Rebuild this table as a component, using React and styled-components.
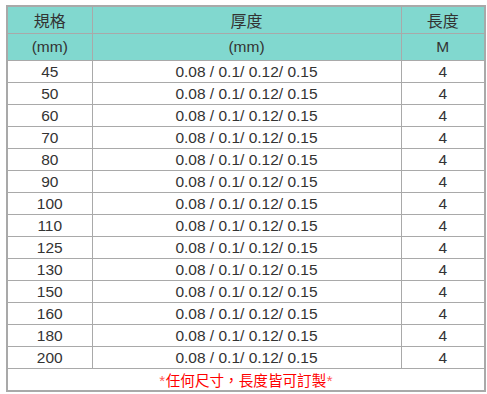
import React from 'react';
import styled, { createGlobalStyle } from 'styled-components';

const sizes = ['45', '50', '60', '70', '80', '90', '100', '110', '125', '130', '150', '160', '180', '200'];

export default function App() {
   return (
      <>
         <GlobalStyle />
         <Wrap>
            <Table>
               <colgroup>
                  <col style={{ width: 85 }} />
                  <col style={{ width: 309 }} />
                  <col />
               </colgroup>
               <thead>
                  <tr>
                     <Head>規格</Head>
                     <Head>厚度</Head>
                     <Head>長度</Head>
                  </tr>
                  <tr>
                     <Head $latin>(mm)</Head>
                     <Head $latin>(mm)</Head>
                     <Head $latin>M</Head>
                  </tr>
               </thead>
               <tbody>
                  {sizes.map((s) => (
                     <tr key={s}>
                        <Cell>{s}</Cell>
                        <Cell>0.08 / 0.1/ 0.12/ 0.15</Cell>
                        <Cell>4</Cell>
                     </tr>
                  ))}
                  <tr>
                     <Note colSpan={3}>
                        <Star>*</Star>任何尺寸，長度皆可訂製<Star>*</Star>
                     </Note>
                  </tr>
               </tbody>
            </Table>
         </Wrap>
      </>
   );
}

const GlobalStyle = createGlobalStyle`
   body {
      margin: 0;
      background: #fff;
      font-family: "Liberation Sans", "Noto Sans CJK TC", sans-serif;
   }
`;

const Wrap = styled.div`
   padding: 5px 0 0 6px;
`;

const Table = styled.table`
   width: 480px;
   border-collapse: collapse;
   border: 2px solid #a9a9a9;
   table-layout: fixed;
`;

const Head = styled.th`
   height: 26px;
   padding: 0;
   background: #81d8cf;
   border: 1px solid #a9a9a9;
   color: #333;
   font-size: ${(p) => (p.$latin ? '15.5px' : '16px')};
   font-weight: normal;
   text-align: center;
   vertical-align: middle;
`;

const Cell = styled.td`
   height: 21px;
   padding: 0;
   border: 1px solid #a9a9a9;
   color: #333;
   font-size: 15.5px;
   text-align: center;
   vertical-align: middle;
`;

const Note = styled.td`
   height: 21px;
   padding: 0;
   border: 1px solid #a9a9a9;
   color: #f00;
   font-size: 14.6px;
   text-align: center;
`;

const Star = styled.span`
   display: inline-block;
   width: 7px;
   color: #ff5a5a;
   font-size: 15px;
`;
